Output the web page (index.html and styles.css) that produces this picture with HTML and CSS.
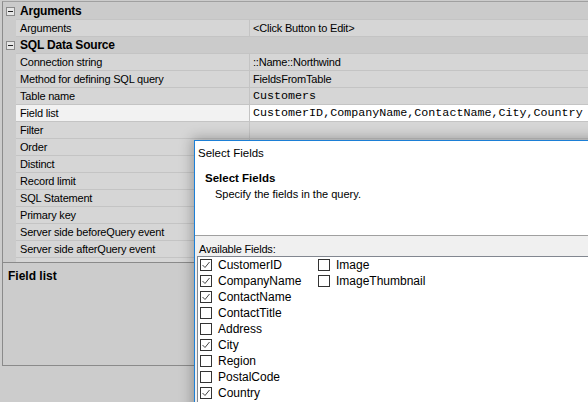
FILE: index.html
```html
<!DOCTYPE html>
<html>
<head lang="en">
    <meta charset="UTF-8">
    <title>Field list</title>
    <link rel="stylesheet" href="styles.css">
</head>
<body>
    <div class="grid">
        <div class="row cat"><span class="gutter"><i class="toggle"></i></span><span class="name">Arguments</span></div>
        <div class="row"><span class="gutter"></span><span class="name">Arguments</span><span class="value">&lt;Click Button to Edit&gt;</span></div>
        <div class="row cat"><span class="gutter"><i class="toggle"></i></span><span class="name">SQL Data Source</span></div>
        <div class="row"><span class="gutter"></span><span class="name">Connection string</span><span class="value">::Name::Northwind</span></div>
        <div class="row"><span class="gutter"></span><span class="name">Method for defining SQL query</span><span class="value">FieldsFromTable</span></div>
        <div class="row"><span class="gutter"></span><span class="name">Table name</span><span class="value mono">Customers</span></div>
        <div class="row sel"><span class="gutter"></span><span class="name">Field list</span><span class="value mono">CustomerID,CompanyName,ContactName,City,Country</span></div>
        <div class="row"><span class="gutter"></span><span class="name">Filter</span><span class="value"></span></div>
        <div class="row"><span class="gutter"></span><span class="name">Order</span><span class="value"></span></div>
        <div class="row"><span class="gutter"></span><span class="name">Distinct</span><span class="value"></span></div>
        <div class="row"><span class="gutter"></span><span class="name">Record limit</span><span class="value"></span></div>
        <div class="row"><span class="gutter"></span><span class="name">SQL Statement</span><span class="value"></span></div>
        <div class="row"><span class="gutter"></span><span class="name">Primary key</span><span class="value"></span></div>
        <div class="row"><span class="gutter"></span><span class="name">Server side beforeQuery event</span><span class="value"></span></div>
        <div class="row"><span class="gutter"></span><span class="name">Server side afterQuery event</span><span class="value"></span></div>
        <div class="row"><span class="gutter"></span><span class="name">Parameters</span><span class="value"></span></div>
    </div>
    <div class="help"><b>Field list</b></div>

    <div class="dialog">
        <div class="titlebar">Select Fields</div>
        <div class="header">
            <b>Select Fields</b>
            <p>Specify the fields in the query.</p>
        </div>
        <div class="body">
            <div class="caption">Available Fields:</div>
            <div class="list">
                <label class="item"><span class="box on"></span>CustomerID</label>
                <label class="item"><span class="box on"></span>CompanyName</label>
                <label class="item"><span class="box on"></span>ContactName</label>
                <label class="item"><span class="box"></span>ContactTitle</label>
                <label class="item"><span class="box"></span>Address</label>
                <label class="item"><span class="box on"></span>City</label>
                <label class="item"><span class="box"></span>Region</label>
                <label class="item"><span class="box"></span>PostalCode</label>
                <label class="item"><span class="box on"></span>Country</label>
                <label class="item"><span class="box"></span>Phone</label>
                <label class="item"><span class="box"></span>Fax</label>
                <label class="item"><span class="box"></span>Image</label>
                <label class="item"><span class="box"></span>ImageThumbnail</label>
            </div>
        </div>
    </div>
</body>
</html>
```

FILE: styles.css
```css
*{box-sizing:border-box;}
body{
    margin:0;
    width:588px;
    height:402px;
    overflow:hidden;
    position:relative;
    background:#cccccc;
    color:#000;
    font:11px "Liberation Sans",Arial,sans-serif;
}

/* property grid */
.grid{
    margin:1px 0 0 2px;
    height:261px;
    padding-top:1px;
    border-top:1px solid #a0a0a0;
    border-left:1px solid #8c8c8c;
    overflow:hidden;
}
.row{display:flex;height:17px;white-space:nowrap;}
.gutter{width:13px;flex:none;background:#cbcbcb;}
.name{
    width:234px;
    flex:none;
    padding-left:4px;
    line-height:16px;
    letter-spacing:-.2px;
    background:#d6d6d6;
    border-right:1px solid #c4c4c4;
    border-bottom:1px solid #c4c4c4;
}
.value{
    flex:1;
    padding-left:3px;
    line-height:16px;
    letter-spacing:-.2px;
    background:#d6d6d6;
    border-bottom:1px solid #c4c4c4;
}
.value.mono{font:11.7px "Liberation Mono",monospace;letter-spacing:0;line-height:16px;}
.cat .name{
    flex:1;
    width:auto;
    background:#cbcbcb;
    border-right:none;
    border-bottom-color:#c4c4c4;
    font-weight:bold;
    font-size:12px;
}
.sel .name{background:#f2f2f2;}
.sel .value{background:#fff;}
.toggle{
    display:block;
    position:relative;
    width:9px;
    height:9px;
    margin:4px 0 0 3px;
    border:1px solid #8a8a8a;
    background:#e6e6e6;
}
.toggle:after{
    content:'';
    position:absolute;
    left:1px;
    top:3px;
    width:5px;
    height:1px;
    background:#222;
}

/* description box */
.help{
    margin-left:2px;
    height:104px;
    padding:6px 0 0 5px;
    border:1px solid #8a8a8a;
    border-right:none;
    font-size:12px;
    line-height:14px;
}

/* select fields window */
.dialog{
    position:absolute;
    left:194px;
    top:140px;
    width:430px;
    height:300px;
    background:#f0f0f0;
    border:1px solid #1c7fd6;
    box-shadow:0 0 12px 2px rgba(0,0,0,.28);
}
.titlebar{
    height:24px;
    line-height:24px;
    padding-left:3px;
    background:#fff;
    font-size:11.5px;
}
.header{
    height:71px;
    padding:6px 0 0 10px;
    background:#fff;
    border-bottom:1px solid #a0a0a0;
    line-height:14px;
}
.header b{display:block;font-size:11.5px;}
.header p{margin:2px 0 0 10px;}
.body{padding:6px 0 0 2px;}
.caption{height:14px;line-height:14px;padding-left:2px;letter-spacing:-.2px;}
.list{
    display:grid;
    grid-auto-flow:column;
    grid-template-rows:repeat(11,16px);
    grid-template-columns:repeat(2,118px);
    padding-left:2px;
    background:#fff;
    border:1px solid #828790;
    font-size:12px;
}
.item{display:flex;align-items:center;gap:6px;white-space:nowrap;}
.box{
    width:12px;
    height:12px;
    flex:none;
    border:1px solid #333;
    background:#fff;
}
.box.on{
    background:#fff url("data:image/svg+xml,%3Csvg xmlns='http://www.w3.org/2000/svg' width='10' height='10'%3E%3Cpolyline points='1.5,5 4,7.5 8.5,2' fill='none' stroke='%23444' stroke-width='1'/%3E%3C/svg%3E") no-repeat center;
}
```
